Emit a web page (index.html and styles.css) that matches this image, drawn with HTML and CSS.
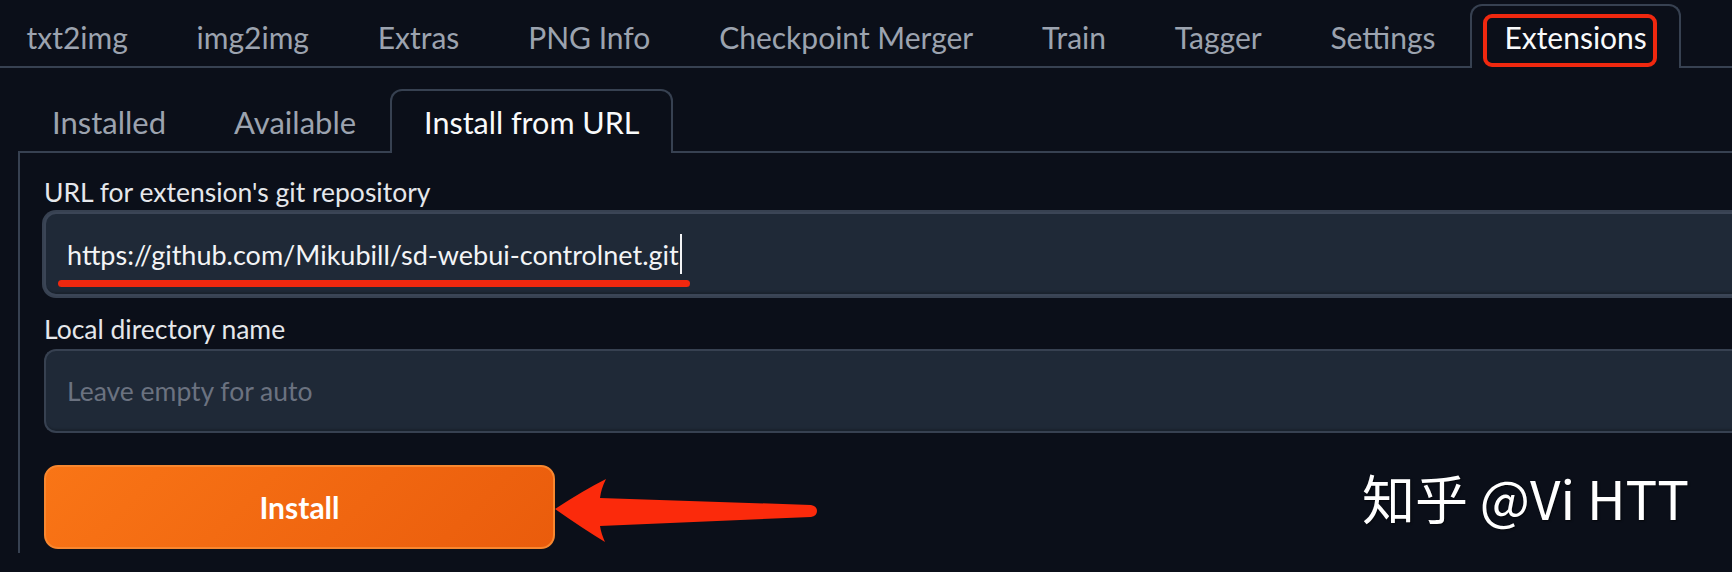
FILE: index.html
```html
<!DOCTYPE html>
<html lang="en">
<head>
<meta charset="utf-8">
<title>Extensions</title>
<link rel="stylesheet" href="styles.css">
</head>
<body>
<div class="app">
  <nav class="tabs main-tabs">
    <button class="tab">txt2img</button>
    <button class="tab">img2img</button>
    <button class="tab">Extras</button>
    <button class="tab">PNG Info</button>
    <button class="tab">Checkpoint Merger</button>
    <button class="tab">Train</button>
    <button class="tab">Tagger</button>
    <button class="tab">Settings</button>
    <button class="tab selected"><span class="boxed">Extensions</span></button>
  </nav>
  <div class="subtabs">
    <nav class="tabs sub-tabs">
      <button class="tab">Installed</button>
      <button class="tab">Available</button>
      <button class="tab selected">Install from URL</button>
    </nav>
    <div class="panel">
      <div class="field">
        <div class="label">URL for extension's git repository</div>
        <div class="input focused"><span class="value">https://github.com/Mikubill/sd-webui-controlnet.git</span><span class="caret"></span><span class="underline"></span></div>
      </div>
      <div class="field second">
        <div class="label">Local directory name</div>
        <div class="input"><span class="placeholder">Leave empty for auto</span></div>
      </div>
      <div class="actions">
        <button class="install">Install</button>
        <svg class="arrow" width="280" height="80" viewBox="0 0 280 80">
          <path d="M1 44 Q 30 25 52 14 Q 47 24 46 33 L 257 40 Q 263 41 263 46 Q 263 51 257 52 L 46 61 Q 47 68 51 77 Q 28 63 1 44 Z" fill="#fb2a0b"/>
        </svg>
      </div>
    </div>
  </div>
</div>
<div class="watermark">知乎 @Vi HTT</div>
</body>
</html>
```
FILE: styles.css
```css
* { box-sizing: border-box; }

html, body {
  margin: 0;
  padding: 0;
}

body {
  width: 1732px;
  height: 572px;
  overflow: hidden;
  background: #0b0f19;
  font-family: Lato, "Noto Sans", sans-serif;
  position: relative;
}

.app {
  width: 1732px;
  height: 572px;
  overflow: hidden;
}

.tabs {
  display: flex;
  align-items: flex-end;
  border-bottom: 2px solid #374151;
}

.main-tabs {
  padding-top: 4px;
}

.tab {
  font-family: inherit;
  font-size: 30px;
  height: 64px;
  margin-bottom: -2px;
  padding: 0 32.4px;
  border: 2px solid transparent;
  border-bottom: none;
  border-radius: 12px 12px 0 0;
  background: transparent;
  color: #9ca3af;
  white-space: nowrap;
}

.main-tabs .tab:first-child {
  padding-left: 24.5px;
}

.sub-tabs .tab {
  font-size: 31px;
  padding: 0 32px;
}

.sub-tabs .tab.selected {
  font-size: 30.5px;
}

.tab.selected {
  border-color: #374151;
  background: #0b0f19;
  color: #f9fafb;
}

.boxed {
  position: relative;
}

.boxed::after {
  content: "";
  position: absolute;
  left: -21px;
  right: -10px;
  top: -5px;
  bottom: -12px;
  border: 4px solid #f0280f;
  border-radius: 9px;
}

.subtabs {
  margin-left: 18px;
  margin-top: 21px;
}

.panel {
  border-left: 2px solid #374151;
  height: 400px;
  padding: 22px 0 0 24px;
  display: flex;
  flex-direction: column;
}

.field {
  display: flex;
  flex-direction: column;
}

.field.second {
  margin-top: 16px;
}

.label {
  font-size: 26.5px;
  line-height: 34px;
  color: #e5e7eb;
  margin-bottom: 3px;
}

.input {
  position: relative;
  height: 84px;
  border: 2px solid #374151;
  border-right: none;
  border-radius: 12px 0 0 12px;
  background: #1f2937;
  box-shadow: inset 0 -4px 2px -2px rgba(0, 0, 0, 0.18);
  display: flex;
  align-items: center;
  padding-left: 21px;
  font-size: 27px;
}

.input.focused {
  border-color: #3b4556;
  box-shadow: 0 0 0 2px #374151, inset 0 -4px 2px -2px rgba(0, 0, 0, 0.18);
}

.value {
  color: #f3f4f6;
}

.caret {
  width: 2px;
  height: 40px;
  background: #f3f4f6;
  margin-left: 1px;
}

.underline {
  position: absolute;
  left: 12px;
  top: 66px;
  width: 632px;
  height: 7px;
  border-radius: 4px;
  background: #f0280f;
}

.placeholder {
  color: #6b7280;
  font-size: 26.5px;
}

.actions {
  margin-top: 32px;
  display: flex;
  align-items: center;
  position: relative;
}

.install {
  width: 511px;
  height: 84px;
  border: 2px solid #f8872f;
  border-radius: 14px;
  background: linear-gradient(135deg, #f97516, #ea5c0c);
  color: #ffffff;
  font-family: inherit;
  font-size: 30px;
  font-weight: 700;
}

.arrow {
  position: absolute;
  left: 510px;
  top: 0;
}

.watermark {
  position: absolute;
  left: 1362px;
  top: 469px;
  font-family: "Noto Sans CJK SC", sans-serif;
  font-size: 53px;
  line-height: 56px;
  color: #ffffff;
  text-shadow: 1px 1px 2px rgba(0, 0, 0, 0.6);
  white-space: nowrap;
}
```
